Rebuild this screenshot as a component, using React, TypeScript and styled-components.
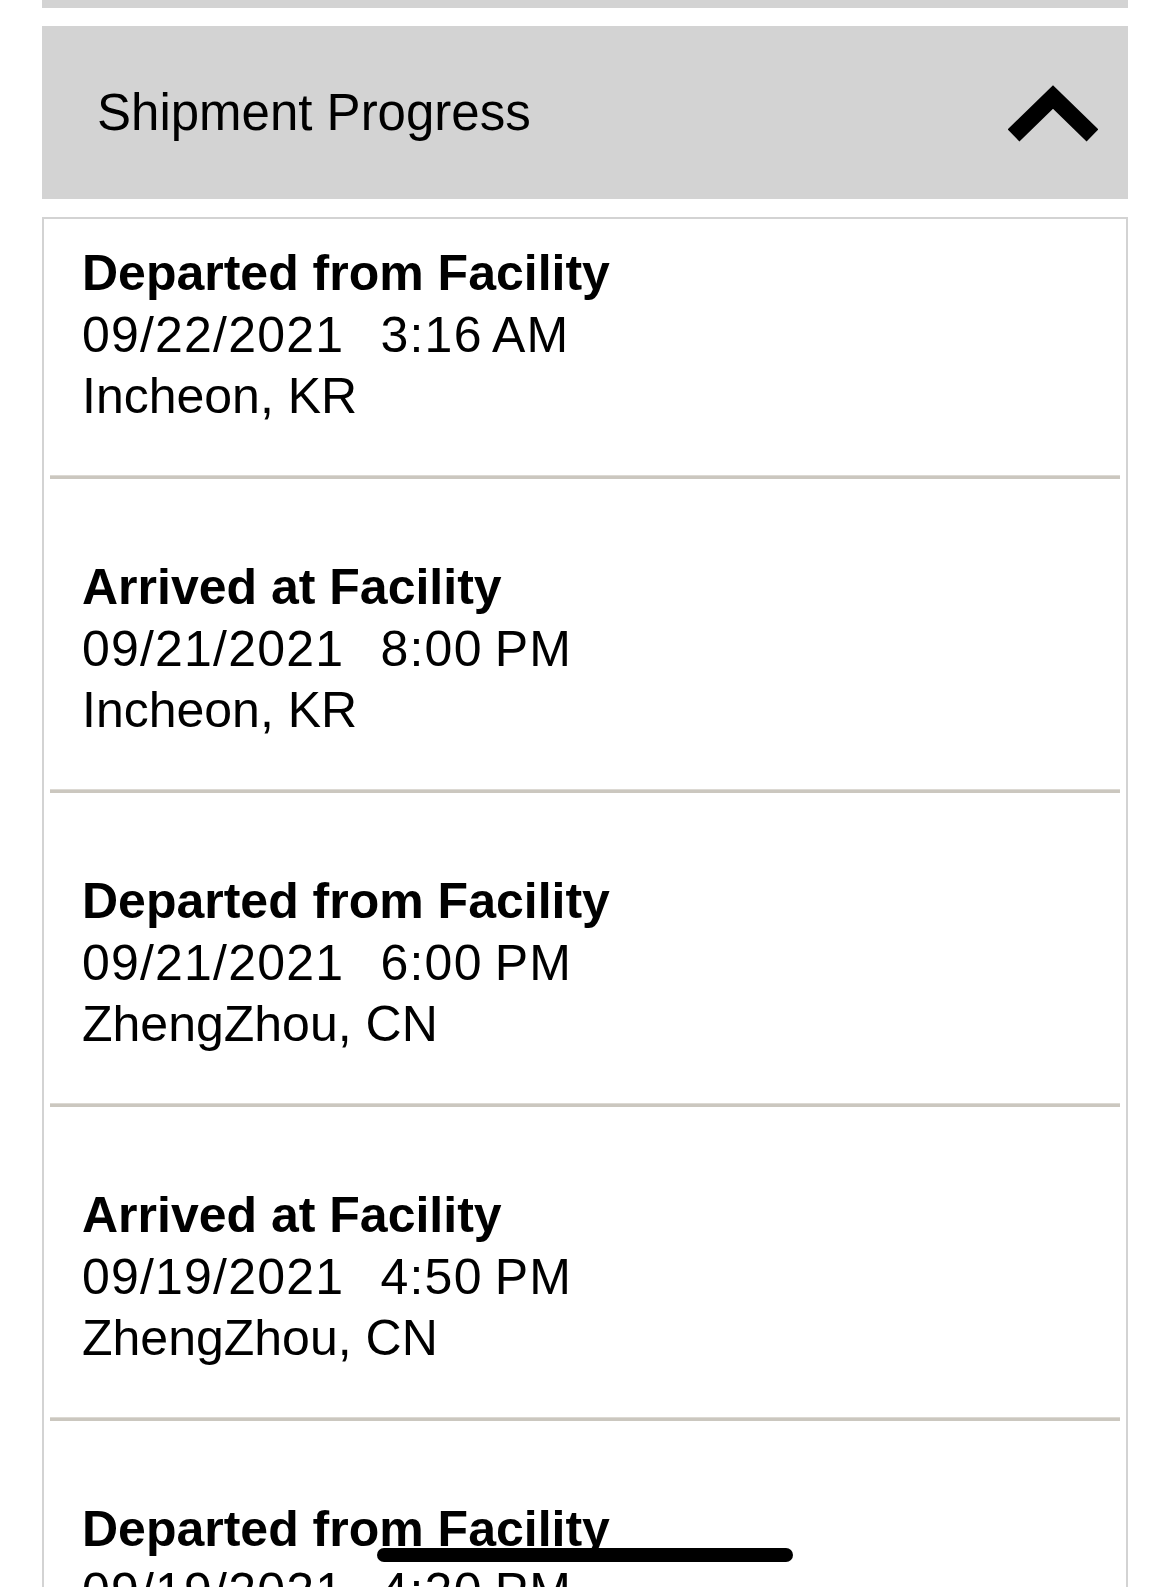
import React from "react";
import styled, { createGlobalStyle } from "styled-components";

const GlobalStyle = createGlobalStyle`
  html, body {
    margin: 0;
    padding: 0;
    background: #ffffff;
    overflow: hidden;
  }
  body {
    font-family: "Liberation Sans", Arial, Helvetica, sans-serif;
    color: #000000;
  }
`;

const Page = styled.div`
  width: 1170px;
  height: 1587px;
  overflow: hidden;
  box-sizing: border-box;
  padding: 0 42px;
  display: flex;
  flex-direction: column;
  gap: 18px;
  background: #ffffff;
`;

const PrevPanel = styled.div`
  height: 8px;
  flex: none;
  background: #d3d3d3;
`;

const SectionHeader = styled.div`
  height: 173px;
  flex: none;
  background: #d3d3d3;
  display: flex;
  align-items: center;
  justify-content: space-between;
  padding: 0 31px 0 55px;
`;

const SectionTitle = styled.h2`
  margin: 0;
  font-family: "Liberation Sans", Arial, sans-serif;
  font-weight: 400;
  font-size: 51px;
  line-height: 60px;
  color: #000;
`;

const Chevron = styled.svg`
  display: block;
  width: 90px;
  height: 57px;
  margin-top: 2px;
  margin-right: -1px;
`;

const EventList = styled.div`
  flex: none;
  border: 2px solid #d3d3d3;
  background: #ffffff;
`;

const EventItem = styled.div<{ $first?: boolean }>`
  padding: ${(p) => (p.$first ? "24px" : "78px")} 38px 47.5px 38px;
`;

const EventTitle = styled.div`
  font-weight: 700;
  font-size: 50px;
  line-height: 61.5px;
  white-space: pre;
`;

const EventLine = styled.div<{ $numeric?: boolean }>`
  font-weight: 400;
  font-size: 50px;
  line-height: 61.5px;
  white-space: pre;
  letter-spacing: ${(p) => (p.$numeric ? "1.2px" : "0")};
  word-spacing: ${(p) => (p.$numeric ? "-3px" : "0")};
`;

const Divider = styled.div`
  height: 4px;
  box-sizing: border-box;
  margin: 0 6px;
  background: #cbc7bf;
  border-top: 1px solid #dcd9d3;
`;

const HomeIndicator = styled.div`
  position: fixed;
  left: 50%;
  bottom: 25px;
  transform: translateX(-50%);
  width: 416px;
  height: 14px;
  border-radius: 7px;
  background: #000;
`;

type Ev = { title: string; date: string; time: string; place: string };

const events: Ev[] = [
  { title: "Departed from Facility", date: "09/22/2021", time: "3:16 AM", place: "Incheon, KR" },
  { title: "Arrived at Facility", date: "09/21/2021", time: "8:00 PM", place: "Incheon, KR" },
  { title: "Departed from Facility", date: "09/21/2021", time: "6:00 PM", place: "ZhengZhou, CN" },
  { title: "Arrived at Facility", date: "09/19/2021", time: "4:50 PM", place: "ZhengZhou, CN" },
  { title: "Departed from Facility", date: "09/19/2021", time: "4:20 PM", place: "ZhengZhou, CN" },
];

export default function App() {
  return (
    <>
      <GlobalStyle />
      <Page>
        <PrevPanel />
        <SectionHeader>
          <SectionTitle>Shipment Progress</SectionTitle>
          <Chevron viewBox="0 0 90 57" aria-hidden="true">
            <polyline
              points="5.5,50.5 45,12 84.5,50.5"
              fill="none"
              stroke="#000"
              strokeWidth="17"
              strokeLinejoin="miter"
              strokeLinecap="butt"
            />
          </Chevron>
        </SectionHeader>
        <EventList>
          {events.map((e, i) => (
            <React.Fragment key={i}>
              {i > 0 && <Divider />}
              <EventItem $first={i === 0}>
                <EventTitle>{e.title}</EventTitle>
                <EventLine $numeric>{`${e.date}   ${e.time}`}</EventLine>
                <EventLine>{e.place}</EventLine>
              </EventItem>
            </React.Fragment>
          ))}
        </EventList>
      </Page>
      <HomeIndicator />
    </>
  );
}
